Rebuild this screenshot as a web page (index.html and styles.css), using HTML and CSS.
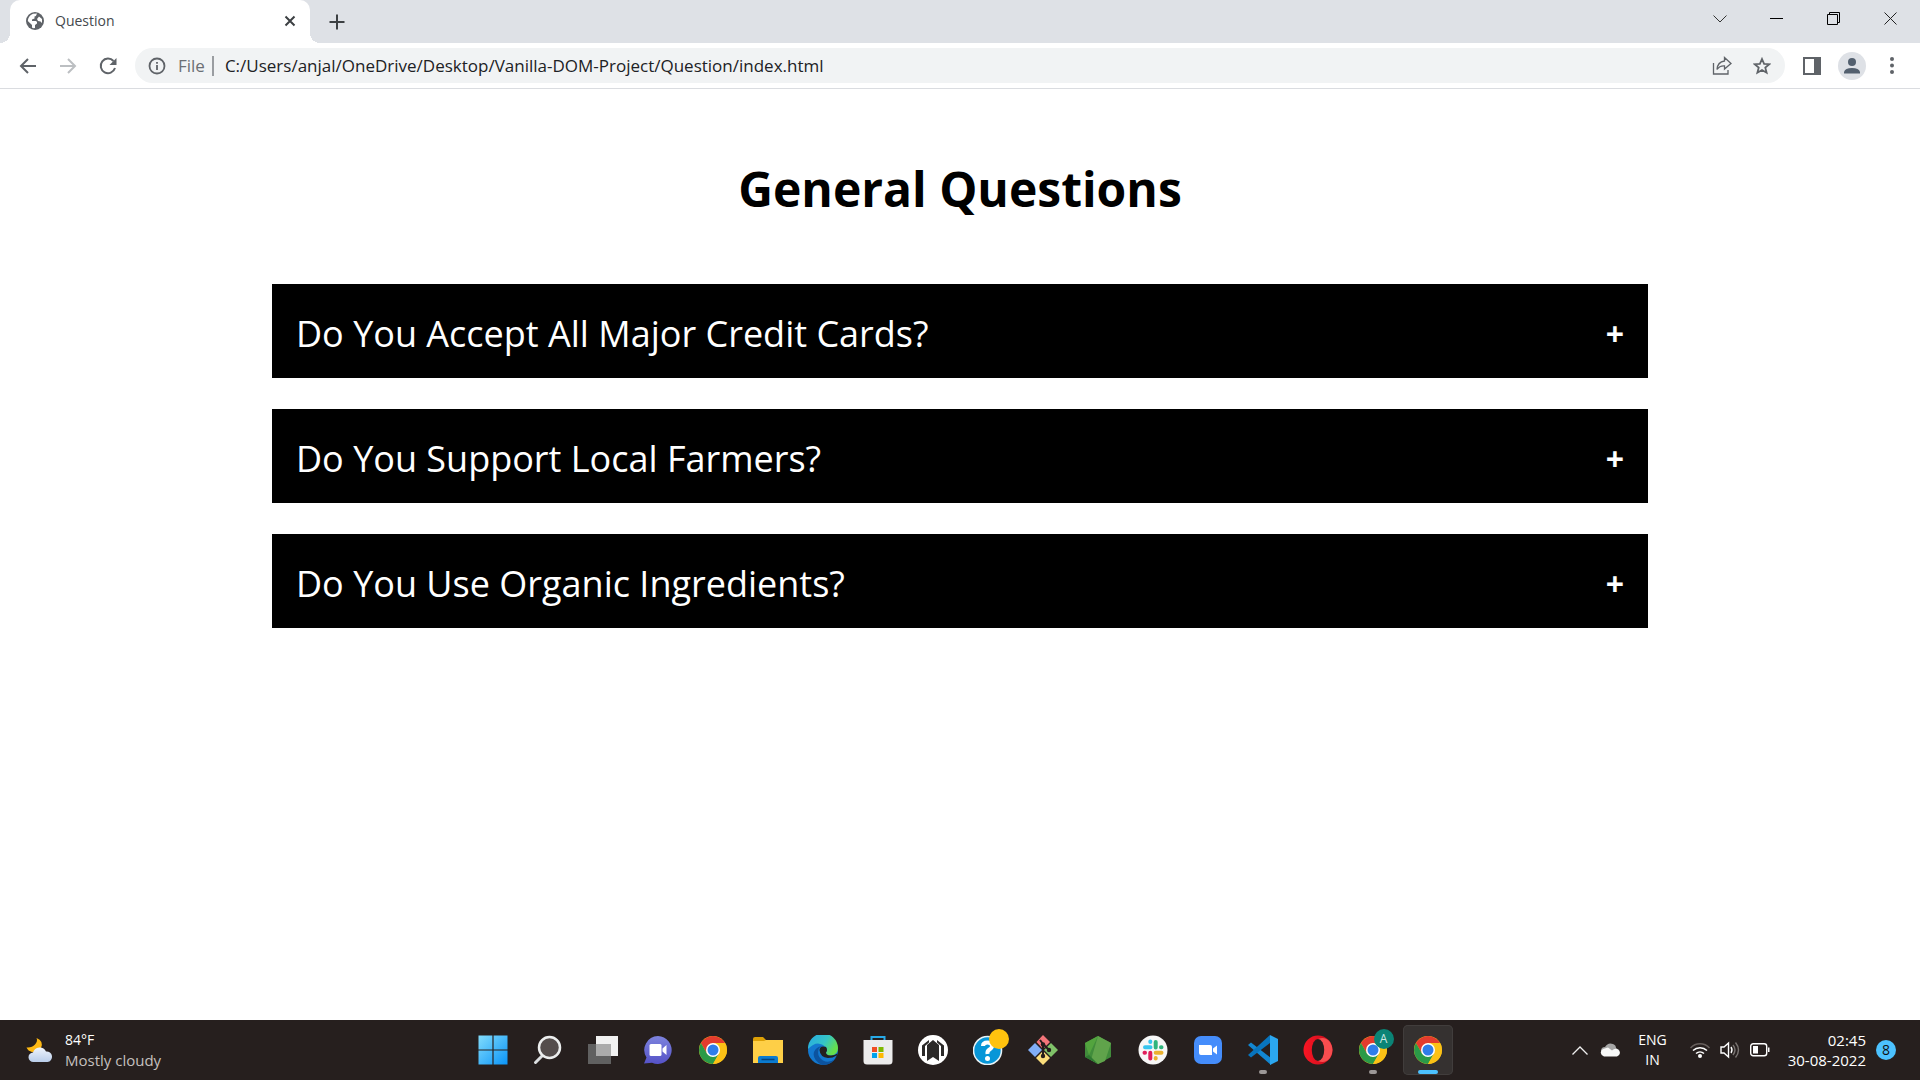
FILE: index.html
```html
<!DOCTYPE html>
<html lang="en">
<head>
<meta charset="utf-8">
<meta name="viewport" content="width=device-width, initial-scale=1">
<title>Question</title>
<link rel="stylesheet" href="styles.css">
</head>
<body>
<svg class="defs" aria-hidden="true">
  <symbol id="chrome" viewBox="0 0 28 28">
    <circle cx="14" cy="14" r="14" fill="#fbc116"/>
    <path d="M14 7H26.1A14 14 0 0 0 1.9 7L8 17.500Z" fill="#e33b2e"/>
    <path d="M1.900 7A14 14 0 0 0 14 28L20 17.500 14 14 8 17.500Z" fill="#2a9a48"/>
    <path d="M20 17.500L14 28A14 14 0 0 0 26.100 7H14Z" fill="#fbc116"/>
    <circle cx="14" cy="14" r="7" fill="#fff"/>
    <circle cx="14" cy="14" r="5.500" fill="#2f7de9"/>
  </symbol>
</svg>

<header class="browser">
  <div class="tab-strip">
    <div class="tab">
      <svg class="favicon" viewBox="0 0 18 18"><circle cx="9" cy="9" r="9" fill="#5f6368"/><path d="M7 1.800L11 1.500Q10.500 4 8.500 4.500V6.500L6 7.500V9H10Q11.500 9.500 11 11.500L9 13V16Q7 16.500 6 15.500V13L1.800 9Q2 4 7 1.800M13 4.500L16 7V11L14.500 9.500 12 9 11 7Z" fill="#fff"/></svg>
      <span class="tab-title">Question</span>
      <button class="tab-close" aria-label="Close tab"><svg width="12" height="12" viewBox="0 0 12 12"><path d="M1.500 1.500L10.500 10.500M10.500 1.500L1.500 10.500" stroke="#3c4043" stroke-width="2"/></svg></button>
    </div>
    <button class="new-tab" aria-label="New tab"><svg width="16" height="16" viewBox="0 0 16 16"><path d="M8 0.500V15.500M0.500 8H15.500" stroke="#3c4043" stroke-width="2"/></svg></button>
    <div class="window-controls">
      <button aria-label="Search tabs"><svg width="14" height="8" viewBox="0 0 14 8"><path d="M.5 .5L7 7L13.500 .5" fill="none" stroke="#333"/></svg></button>
      <button aria-label="Minimize"><svg width="13" height="3" viewBox="0 0 13 3"><path d="M0 1.500H13" stroke="#000"/></svg></button>
      <button aria-label="Restore"><svg width="13" height="13" viewBox="0 0 13 13"><path d="M.5 2.500H10.500V12.500H.5ZM2.500 2.500V.5H12.500V10.500H10.500" fill="none" stroke="#000"/></svg></button>
      <button aria-label="Close"><svg width="13" height="13" viewBox="0 0 13 13"><path d="M.5 .5L12.500 12.500M12.500 .5L.5 12.500" stroke="#222"/></svg></button>
    </div>
  </div>
  <div class="toolbar">
    <button class="nav" aria-label="Back"><svg width="18" height="18" viewBox="0 0 18 18"><path d="M17 9H2M9 2L2 9L9 16" fill="none" stroke="#5f6368" stroke-width="2"/></svg></button>
    <button class="nav" aria-label="Forward"><svg width="18" height="18" viewBox="0 0 18 18"><path d="M1 9H16M9 2L16 9L9 16" fill="none" stroke="#bcbfc2" stroke-width="2"/></svg></button>
    <button class="nav" aria-label="Reload"><svg width="18" height="18" viewBox="0 0 18 18"><path d="M14.500 4A7.300 7.300 0 1 0 16 11" fill="none" stroke="#5f6368" stroke-width="2"/><path d="M17.500 1V8H10.500Z" fill="#5f6368"/></svg></button>
    <form class="omnibox">
      <svg width="18" height="18" viewBox="0 0 18 18"><circle cx="9" cy="9" r="7.500" fill="none" stroke="#5f6368" stroke-width="1.800"/><path d="M9 8V13M9 5V6.800" stroke="#5f6368" stroke-width="1.800"/></svg>
      <label class="scheme" for="url">File</label>
      <input id="url" class="url" type="text" value="C:/Users/anjal/OneDrive/Desktop/Vanilla-DOM-Project/Question/index.html">
      <button type="button" class="nav" aria-label="Share"><svg width="20" height="20" viewBox="0 0 20 20"><path d="M1.500 7V18H16V14" fill="none" stroke="#5f6368" stroke-width="1.300"/><path d="M12.500 1.500L19 7.500L12.500 13V9.800Q7.500 9.500 5 13.500Q5.500 6 12.500 5Z" fill="none" stroke="#5f6368" stroke-width="1.300"/></svg></button>
      <button type="button" class="nav" aria-label="Bookmark"><svg width="18" height="18" viewBox="0 0 18 18"><path d="M9 2L11.100 6.800L16.300 7.200L12.300 10.600L13.600 15.700L9 13L4.400 15.700L5.700 10.600L1.700 7.200L6.900 6.800Z" fill="none" stroke="#5f6368" stroke-width="1.800"/></svg></button>
    </form>
    <div class="actions">
      <button class="nav" aria-label="Side panel"><svg width="18" height="18" viewBox="0 0 18 18"><path d="M0 0H18V18H0ZM2 2V16H11V2Z" fill="#5f6368" fill-rule="evenodd"/></svg></button>
      <button class="nav" aria-label="Profile"><svg width="28" height="28" viewBox="0 0 28 28"><circle cx="14" cy="14" r="14" fill="#dee1e6"/><circle cx="14" cy="10" r="4" fill="#53606f"/><path d="M6 21.500V20Q7 16 14 16T22 20V21.500Z" fill="#53606f"/></svg></button>
      <button class="nav" aria-label="Menu"><svg width="4" height="17" viewBox="0 0 4 17"><g fill="#5f6368"><circle cx="2" cy="2" r="2"/><circle cx="2" cy="8.500" r="2"/><circle cx="2" cy="15" r="2"/></g></svg></button>
    </div>
  </div>
</header>

<main class="page">
  <h1 class="title">General Questions</h1>
  <section class="questions">
    <article class="question"><h2>Do You Accept All Major Credit Cards?</h2><button class="toggle" aria-label="Show answer">+</button></article>
    <article class="question"><h2>Do You Support Local Farmers?</h2><button class="toggle" aria-label="Show answer">+</button></article>
    <article class="question"><h2>Do You Use Organic Ingredients?</h2><button class="toggle" aria-label="Show answer">+</button></article>
  </section>
</main>

<footer class="taskbar">
  <button class="weather">
    <svg width="28" height="26" viewBox="0 0 28 26"><defs><linearGradient id="cl" x2="0" y2="1"><stop stop-color="#eef4fc"/><stop offset="1" stop-color="#b9cdea"/></linearGradient></defs><path d="M10.500 1Q18 4 15 11Q12 16 6 15Q2 14 .5 10.500Q6 11 9 7.500T10.500 1Z" fill="#fdb813"/><path d="M7.500 25A4.600 4.600 0 0 1 7 15.500A7 7 0 0 1 20 14.500A5.300 5.300 0 1 1 21.500 25Z" fill="url(#cl)"/></svg>
    <span class="weather-text"><span>84°F</span><span class="muted">Mostly cloudy</span></span>
  </button>
  <nav class="apps">
    <button class="app" aria-label="Start"><svg viewBox="0 0 30 30"><defs><linearGradient id="w" x2="1" y2="1"><stop stop-color="#82dcfb"/><stop offset="1" stop-color="#0a94f8"/></linearGradient></defs><path d="M.5 .5H14.400V14.400H.5ZM15.600 .5H29.500V14.400H15.600ZM.5 15.600H14.400V29.500H.5ZM15.600 15.600H29.500V29.500H15.600Z" fill="url(#w)"/></svg></button>
    <button class="app" aria-label="Search"><svg viewBox="0 0 30 30"><path d="M9.500 20.500L2.500 27.500" stroke="#dcdfe1" stroke-width="3" stroke-linecap="round"/><circle cx="16.500" cy="12.500" r="10.500" fill="#544d4c" stroke="#eceeee" stroke-width="2.500"/></svg></button>
    <button class="app" aria-label="Task view"><svg viewBox="0 0 30 30"><path d="M8 1H30V21H8Z" fill="#f1f1f1"/><path d="M0 9H23V29H0Z" fill="#606060"/><path d="M8 9H23V21H8Z" fill="#ababab"/></svg></button>
    <button class="app" aria-label="Chat"><svg viewBox="0 0 30 30"><defs><linearGradient id="ch" x2="0" y2="1"><stop stop-color="#7d83dd"/><stop offset="1" stop-color="#5552c7"/></linearGradient></defs><path d="M15 1A14 14 0 1 1 9 27.800L1 28.500L3.500 22.500A14 14 0 0 1 15 1Z" fill="url(#ch)"/><rect x="6.500" y="9" width="12" height="12" rx="1.500" fill="#fff"/><path d="M19.500 13.500L23.500 10V20L19.500 16.500Z" fill="#fff"/></svg></button>
    <button class="app" aria-label="Chrome"><svg viewBox="-1 -1 30 30"><use href="#chrome" width="28" height="28"/></svg></button>
    <button class="app" aria-label="File Explorer"><svg viewBox="0 0 30 30"><path d="M0 12V4Q0 2 2 2H10L13 5V12Z" fill="#dda006"/><path d="M0 6H11L13 5H30V28H0Z" fill="#fecf47"/><path d="M5 28V23Q5 21 7 21H23Q25 21 25 23V28Z" fill="#0b7bd0"/><path d="M8.500 24.500H21.500" stroke="#06437b" stroke-width="1.500"/></svg></button>
    <button class="app" aria-label="Edge"><svg viewBox="0 0 30 30"><defs><linearGradient id="e1" x2="1" y2=".5"><stop stop-color="#26a9e5"/><stop offset=".6" stop-color="#35c4c6"/><stop offset="1" stop-color="#66e04b"/></linearGradient></defs><circle cx="15" cy="15" r="15" fill="#1378cf"/><path d="M0 14A15 15 0 0 1 30 13Q30 20 23 20.500Q18 20.500 18 17.500Q20 15 18 12Q9 4 0 14Z" fill="url(#e1)"/><path d="M11 13Q8 21 15 25.500Q21 28.500 27 24A15 15 0 0 1 14 30Q4 25 6 17Q8 12 14 11Z" fill="#0c539f"/><path d="M18 12Q12 10 11.500 15Q12 22 20 23Q25 23 28.500 20.500Q27 24 26.500 24Q29 22 29.500 18.500Q26 21 22 20.500Q18 20 18 17.500Q20 15 18 12Z" fill="#241f1e"/></svg></button>
    <button class="app" aria-label="Microsoft Store"><svg viewBox="0 0 30 30"><path d="M8.500 7V2H21.500V7" fill="none" stroke="#27aae8" stroke-width="2"/><path d="M1 5H29.500V26Q29.500 29.500 26 29.500H4Q.5 29.500 .5 26V5Z" fill="#ececec"/><path d="M9 12H14V17H9Z" fill="#f04e24"/><path d="M15.500 12H20.500V17H15.500Z" fill="#7eb900"/><path d="M9 18H14V23H9Z" fill="#00a3ee"/><path d="M15.500 18H20.500V23H15.500Z" fill="#feb800"/></svg></button>
    <button class="app" aria-label="Terminal"><svg viewBox="0 0 30 30"><circle cx="15" cy="15" r="15" fill="#fff"/><path d="M4 21V10.500L11 5V7.500L7 11V21ZM26 21V10.500L19 5V7.500L23 11V21Z" fill="#2b2928"/><path d="M9 10L15 5L21 10V26L15 22L9 26Z" fill="#2b2928"/></svg></button>
    <button class="app" aria-label="Help"><svg viewBox="0 0 30 30"><circle cx="14.500" cy="15.500" r="14" fill="#0796d8" stroke="#e9f2f6" stroke-width="1.600"/><path d="M10 11Q10 7.500 14.500 7.500T19 11Q19 13 16.500 14.500T14.500 19" fill="none" stroke="#fff" stroke-width="4"/><circle cx="14.500" cy="23.500" r="2.500" fill="#fff"/></svg><span class="dot"></span></button>
    <button class="app" aria-label="Git Bash"><svg viewBox="0 0 30 30"><path d="M15 0L22 7L15 14L8.500 7Z" fill="#f4757a"/><path d="M23 8L30 15L23 22L16 15Z" fill="#80c269"/><path d="M7 8L14 15L7 22L0 15Z" fill="#81aef7"/><path d="M15 16L22 23L15 30L8 23Z" fill="#fbdd7b"/><path d="M12 5L15 9V21M15 9L21 15" stroke="#241c1c" stroke-width="2" fill="none"/><g fill="#241c1c"><circle cx="15" cy="9.500" r="2.200"/><circle cx="21" cy="15" r="2.200"/><circle cx="15" cy="21" r="2.200"/></g></svg></button>
    <button class="app" aria-label="Node.js"><svg viewBox="0 0 30 30"><path d="M15 1L28 8V22L15 29L2 22V8Z" fill="#418c3b"/><path d="M15 1L28 8L22 26L15 29L8 25Z" fill="#60a34b"/><path d="M15 1L2 8L6 20Z" fill="#53a43e"/><path d="M6 20L2 22L15 29Z" fill="#2e7931"/></svg></button>
    <button class="app" aria-label="Slack"><svg viewBox="0 0 30 30"><circle cx="15" cy="15" r="14.500" fill="#f7f7f7"/><g stroke-width="4" stroke-linecap="round"><path d="M12.300 6.500V7M7 12.300H12.500" stroke="#37c5ef"/><path d="M17.700 7V12.500M23 12.300H23.500" stroke="#2fb57d"/><path d="M17.700 17.700H23.500M17.700 23V23.500" stroke="#ecb22f"/><path d="M12.300 17.700V23.500M6.500 17.700H7" stroke="#e01f5b"/></g></svg></button>
    <button class="app" aria-label="Zoom"><svg viewBox="0 0 30 30"><rect x="1" y="1" width="28" height="28" rx="7" fill="#458dfb"/><path d="M6 10H17Q19 10 19 12V20H8Q6 20 6 18ZM20 13.500L24 10.500V19.500L20 16.500Z" fill="#fff"/></svg></button>
    <button class="app" aria-label="Visual Studio Code"><svg viewBox="0 0 30 30"><path d="M0 10L3 7.500L23 23V30Z" fill="#1287d2"/><path d="M0 20L22 0V8L3 22.500Z" fill="#0874bd"/><path d="M22 0L30 4V26L22 30Z" fill="#2ba7f0"/></svg><span class="running"></span></button>
    <button class="app" aria-label="Opera"><svg viewBox="0 0 30 30"><defs><linearGradient id="op" x2="1"><stop stop-color="#fa1523"/><stop offset="1" stop-color="#c50d1c"/></linearGradient></defs><circle cx="15" cy="15" r="14.500" fill="url(#op)"/><path d="M15 4Q22 1 27 7Q32 15 27 23Q22 29 15 26Z" fill="#f74d4f"/><ellipse cx="15" cy="15" rx="6.200" ry="11" fill="#241e1d"/></svg></button>
    <button class="app" aria-label="Chrome, profile A"><svg viewBox="-1 -1 30 30"><use href="#chrome" width="28" height="28"/></svg><span class="dot profile">A</span><span class="running"></span></button>
    <button class="app active" aria-label="Chrome, current window"><svg viewBox="-1 -1 30 30"><use href="#chrome" width="28" height="28"/></svg><span class="running"></span></button>
  </nav>
  <div class="tray">
    <button aria-label="Hidden icons"><svg width="16" height="9" viewBox="0 0 16 9"><path d="M.5 8.500L8 1L15.500 8.500" fill="none" stroke="#eee" stroke-width="1.300"/></svg></button>
    <button class="cloud" aria-label="OneDrive"><svg width="20" height="14" viewBox="0 0 20 14"><path d="M1 8Q1 4 5 4Q8-1 13 1Q16 2 16 5L19 7L12 11Z" fill="#a5a5a5"/><path d="M4 13.500A4 4 0 0 1 3 6L8 4.500L12 7.500Q15 4.500 18 6.500A3.800 3.800 0 0 1 17 13.500Z" fill="#f8f8f8"/></svg></button>
    <button class="lang"><span>ENG</span><span>IN</span></button>
    <button class="status" aria-label="Network, volume and battery">
      <svg width="20" height="16" viewBox="0 0 20 16"><g fill="none" stroke="#fff" stroke-width="1.500"><path d="M.5 6A13 13 0 0 1 19.500 6" stroke="#675f5d"/><path d="M3 8.500A10 10 0 0 1 17 8.500M6 11.500A6 6 0 0 1 14 11.500"/></g><circle cx="10" cy="14" r="2" fill="#fff"/></svg>
      <svg width="20" height="18" viewBox="0 0 20 18"><g fill="none" stroke="#fff" stroke-width="1.400"><path d="M1 6H4L8.500 2V16L4 12H1Z"/><path d="M11 6Q13 9 11 12"/><path d="M13 4Q17 9 13 14M15.500 1.500Q21.500 9 15.500 16.500" stroke="#797371"/></g></svg>
      <svg width="20" height="14" viewBox="0 0 20 14"><rect x=".7" y=".7" width="16" height="12" rx="2.500" fill="none" stroke="#fff" stroke-width="1.400"/><path d="M3 3H8V10.500H3ZM18 4.500H19.500V9H18Z" fill="#fff"/></svg>
    </button>
    <button class="clock"><span>02:45</span><span>30-08-2022</span></button>
    <button class="badge" aria-label="8 notifications">8</button>
  </div>
</footer>
</body>
</html>
```
FILE: styles.css
```css
* { box-sizing: border-box; }

body {
  margin: 0;
  min-height: 100vh;
  display: flex;
  flex-direction: column;
  background: #fff;
  font-family: "Segoe UI", "Open Sans", "Noto Sans", sans-serif;
}

button {
  border: 0;
  padding: 0;
  background: none;
  color: inherit;
  font: inherit;
  display: flex;
  align-items: center;
  justify-content: center;
}

svg { display: block; flex: none; }
.defs { position: absolute; width: 0; height: 0; }

/* Browser frame */
.tab-strip {
  display: flex;
  height: 43px;
  padding: 0 1px 0 10px;
  background: #dee1e6;
}

.tab {
  position: relative;
  display: flex;
  align-items: center;
  width: 300px;
  padding: 0 12px 2px 16px;
  background: #fff;
  border-radius: 10px 10px 0 0;
}

.tab::before,
.tab::after {
  content: "";
  position: absolute;
  bottom: 0;
  width: 10px;
  height: 10px;
}
.tab::before { right: 100%; background: radial-gradient(circle at 0 0, transparent 10px, #fff 10px); }
.tab::after { left: 100%; background: radial-gradient(circle at 100% 0, transparent 10px, #fff 10px); }

.favicon { width: 18px; height: 18px; }
.tab-title { flex: 1; padding-left: 11px; font-size: 14px; line-height: 20px; color: #45494d; }
.tab-close { width: 16px; height: 16px; }
.new-tab { width: 36px; margin-left: 9px; }

.window-controls { display: flex; height: 37px; margin-left: auto; }
.window-controls button { width: 57px; }

.toolbar {
  display: flex;
  align-items: center;
  height: 46px;
  padding: 0 8px;
  border-bottom: 1px solid #dadce0;
}

.nav { width: 40px; height: 36px; }

.omnibox {
  flex: 1;
  display: flex;
  align-items: center;
  height: 35px;
  margin-left: 7px;
  padding: 0 3px 0 13px;
  border-radius: 18px;
  background: #f1f3f4;
  font-size: 17px;
}

.scheme {
  margin-left: 12px;
  padding-right: 7px;
  border-right: 2px solid #9a9da1;
  line-height: 20px;
  color: #6b6f74;
}

.url {
  flex: 1;
  min-width: 0;
  padding: 0 0 0 11px;
  border: 0;
  background: none;
  font: inherit;
  color: #202124;
}

.actions { display: flex; margin-left: 7px; }

/* Page */
.page {
  flex: 1;
  width: 100%;
  max-width: 1424px;
  margin: 0 auto;
  padding: 60px 24px;
  font-family: "Comic Sans MS", "Comic Sans", "Open Sans", sans-serif;
}

.title {
  margin: 0 0 55px;
  font-size: 48px;
  line-height: 80px;
  text-align: center;
  color: #000;
}

.questions { display: grid; gap: 31px; }

.question {
  display: flex;
  align-items: center;
  justify-content: space-between;
  padding: 25px 24px 19px;
  background: #000;
  color: #fff;
}

.question h2 { margin: 0; font-size: 36px; font-weight: 400; line-height: 50px; }
.toggle { font-size: 32px; font-weight: 700; line-height: 50px; }

/* Taskbar */
.taskbar {
  display: grid;
  grid-template-columns: 1fr auto 1fr;
  align-items: center;
  height: 60px;
  background: #261f1e;
  color: #fff;
  font-size: 14px;
  line-height: 20px;
}

.weather { justify-self: start; gap: 11px; padding-left: 26px; text-align: left; }
.weather-text { display: grid; }
.muted { color: #c5c0be; font-size: 15px; }

.apps { display: flex; gap: 5px; }
.app { position: relative; width: 50px; height: 50px; border-radius: 5px; }
.app svg { width: 30px; height: 30px; }
.active { background: #353130; box-shadow: inset 0 0 0 1px #413d3c; }

.dot {
  position: absolute;
  top: 4px;
  right: 4px;
  width: 20px;
  height: 20px;
  border-radius: 50%;
  background: #ffc20e;
}
.profile { background: #0b8476; color: #cde8e3; font-size: 12px; }

.running {
  position: absolute;
  bottom: 1px;
  left: 50%;
  width: 8px;
  height: 4px;
  margin-left: -4px;
  border-radius: 2px;
  background: #9c9897;
}
.active .running { width: 20px; margin-left: -10px; background: #4cc2ff; }

.tray { display: flex; align-items: center; justify-self: end; padding-right: 24px; }
.cloud { margin-left: 12px; }
.lang { flex-direction: column; margin-left: 18px; }
.status { gap: 10px; margin-left: 23px; }
.clock { flex-direction: column; align-items: flex-end; margin-left: 18px; font-size: 15px; }
.badge {
  width: 20px;
  height: 20px;
  margin-left: 10px;
  border-radius: 50%;
  background: #4cc2ff;
  color: #111;
  font-size: 14px;
}
```
